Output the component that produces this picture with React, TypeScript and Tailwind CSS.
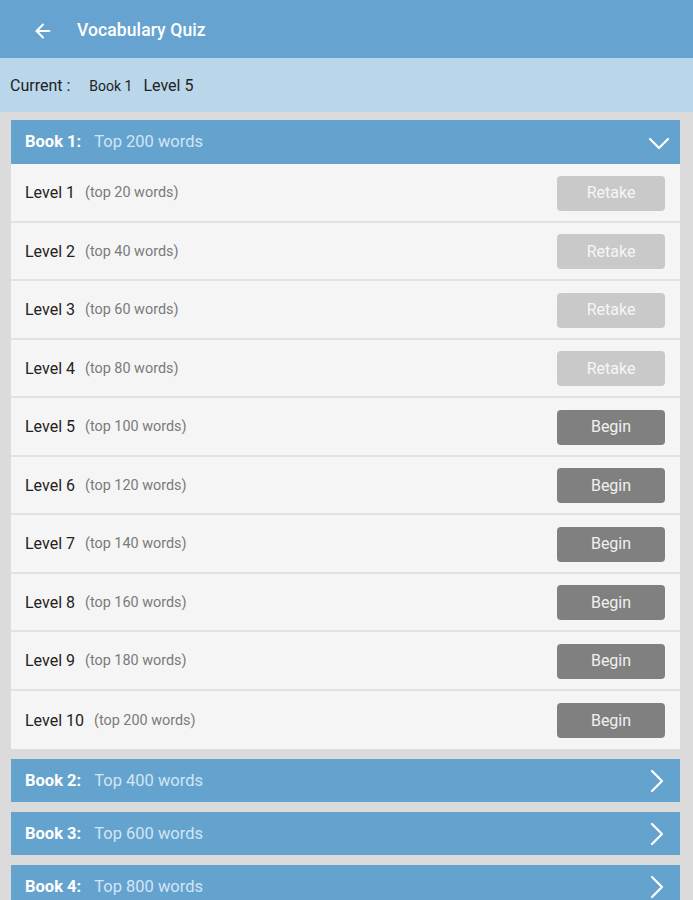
import { ArrowLeft } from 'lucide-react'

const levels = [
  { n: 1, words: 20, done: true },
  { n: 2, words: 40, done: true },
  { n: 3, words: 60, done: true },
  { n: 4, words: 80, done: true },
  { n: 5, words: 100, done: false },
  { n: 6, words: 120, done: false },
  { n: 7, words: 140, done: false },
  { n: 8, words: 160, done: false },
  { n: 9, words: 180, done: false },
  { n: 10, words: 200, done: false },
]

const books = [
  { n: 2, words: 400 },
  { n: 3, words: 600 },
  { n: 4, words: 800 },
]

function ChevDown() {
  return (
    <svg className="ml-auto w-[22px] h-[14px]" viewBox="0 0 22 14" fill="none" stroke="white" strokeWidth={2.2} strokeLinecap="round" strokeLinejoin="round">
      <path d="M2 3l9 9 9-9" />
    </svg>
  )
}

function ChevRight() {
  return (
    <svg className="ml-auto mr-[6px] w-[14px] h-[24px]" viewBox="0 0 14 24" fill="none" stroke="white" strokeWidth={2.2} strokeLinecap="round" strokeLinejoin="round">
      <path d="M2 2l10 10-10 10" />
    </svg>
  )
}

export default function App() {
  return (
    <div className="w-[693px] h-[900px] overflow-hidden bg-[#dbdbdb] font-['Roboto',sans-serif]">
      {/* top bar */}
      <div className="h-[58px] bg-[#66a3d0] flex items-center pt-[3px]">
        <ArrowLeft className="ml-[32px] w-[22px] h-[22px] text-white" strokeWidth={2.2} />
        <span className="ml-[23px] text-white text-[17.5px] font-medium tracking-[0.1px]">Vocabulary Quiz</span>
      </div>

      {/* current */}
      <div className="h-[54px] bg-[#b9d6eb] flex items-center pl-[10px] pt-[2px] text-[#222]">
        <span className="text-[16px]">Current :</span>
        <span className="ml-[19px] text-[14px]">Book 1</span>
        <span className="ml-[11px] text-[16px]">Level 5</span>
      </div>

      <div className="px-[11px] pr-[13px] pt-[8px] flex flex-col gap-[10px]">
        {/* book 1 expanded */}
        <div>
          <div className="h-[44px] bg-[#65a3cf] flex items-center pl-[14px] pr-[10px] pt-[1px]">
            <span className="text-white font-bold text-[16.5px]">Book 1:</span>
            <span className="ml-[13px] text-[#d2e5f4] text-[16.5px]">Top 200 words</span>
            <ChevDown />
          </div>
          <div className="bg-[#f5f5f5]">
            {levels.map((l, i) => (
              <div
                key={l.n}
                className={`h-[58.5px] flex items-center pl-[14px] pr-[15px] pt-[2px] ${i < levels.length - 1 ? 'border-b-2 border-[#e2e2e2]' : ''}`}
              >
                <span className="text-[16px] text-[#222]">Level {l.n}</span>
                <span className="ml-[10px] text-[14.4px] text-[#7a7a7a]">(top {l.words} words)</span>
                <div
                  className={`ml-auto w-[108px] h-[35px] rounded-[4px] flex items-center justify-center text-[16px] ${
                    l.done ? 'bg-[#c9c9c9] text-[#f6f6f6]' : 'bg-[#808080] text-[#f0f0f0]'
                  }`}
                >
                  {l.done ? 'Retake' : 'Begin'}
                </div>
              </div>
            ))}
          </div>
        </div>

        {books.map((b) => (
          <div key={b.n} className="h-[43px] bg-[#65a3cf] flex items-center pl-[14px] pr-[10px] pt-[1px]">
            <span className="text-white font-bold text-[16.5px]">Book {b.n}:</span>
            <span className="ml-[13px] text-[#d2e5f4] text-[16.5px]">Top {b.words} words</span>
            <ChevRight />
          </div>
        ))}
      </div>
    </div>
  )
}
